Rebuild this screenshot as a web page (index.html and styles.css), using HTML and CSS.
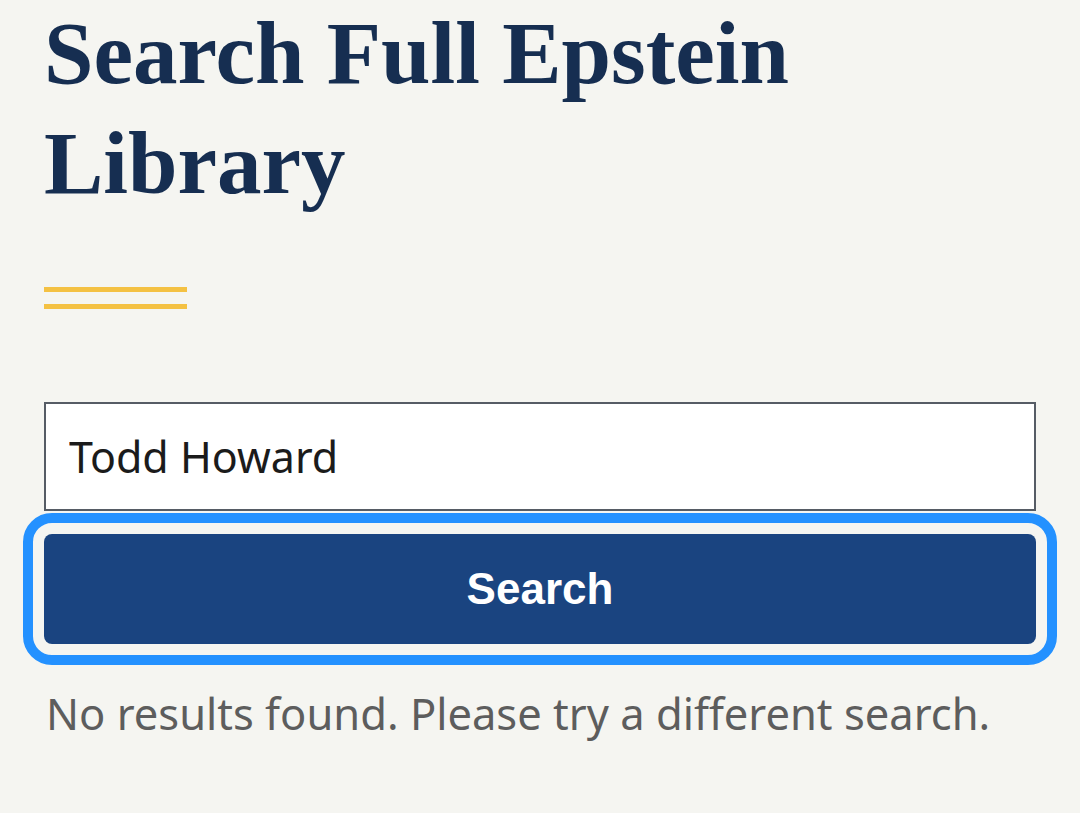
FILE: index.html
```html
<!DOCTYPE html>
<html lang="en">
<head>
<meta charset="utf-8">
<title>Search Full Epstein Library</title>
<link rel="stylesheet" href="styles.css">
</head>
<body>
<main class="page">
  <h1 class="title">Search Full Epstein Library</h1>
  <div class="rule"><span></span><span></span></div>
  <form class="search" onsubmit="return false;">
    <input class="field" type="text" value="Todd Howard" aria-label="Search">
    <button class="btn" type="submit">Search</button>
  </form>
  <p class="msg">No results found. Please try a different search.</p>
</main>
</body>
</html>
```

FILE: styles.css
```css
html, body {
  margin: 0;
  padding: 0;
  background: #f5f5f1;
}
.page {
  padding: 0 44px;
  width: 992px;
}
.title {
  margin: -2px 0 0 0;
  font-family: "Liberation Serif", serif;
  font-weight: 700;
  font-size: 89px;
  line-height: 110px;
  color: #162e51;
  width: 800px;
}
.rule {
  margin-top: 69px;
  display: flex;
  flex-direction: column;
  gap: 12px;
  width: 143px;
}
.rule span {
  display: block;
  height: 5px;
  background: #f4c143;
}
.search {
  margin-top: 93px;
  display: flex;
  flex-direction: column;
}
.field {
  box-sizing: border-box;
  width: 992px;
  height: 109px;
  margin: 0;
  padding: 0 23px;
  border: 2px solid #565c65;
  background: #fff;
  font-family: "Noto Sans", sans-serif;
  font-size: 43px;
  color: #1b1b1b;
  outline: none;
}
.btn {
  margin-top: 23px;
  height: 110px;
  width: 992px;
  border: 0;
  border-radius: 8px;
  background: #1a4480;
  color: #fff;
  font-family: "Liberation Sans", sans-serif;
  font-weight: 700;
  font-size: 44px;
  outline: 10px solid #2491ff;
  outline-offset: 11px;
}
.msg {
  margin: 39px 0 0 2px;
  font-family: "Noto Sans", sans-serif;
  font-size: 43.5px;
  color: #5d5d5d;
}
```
